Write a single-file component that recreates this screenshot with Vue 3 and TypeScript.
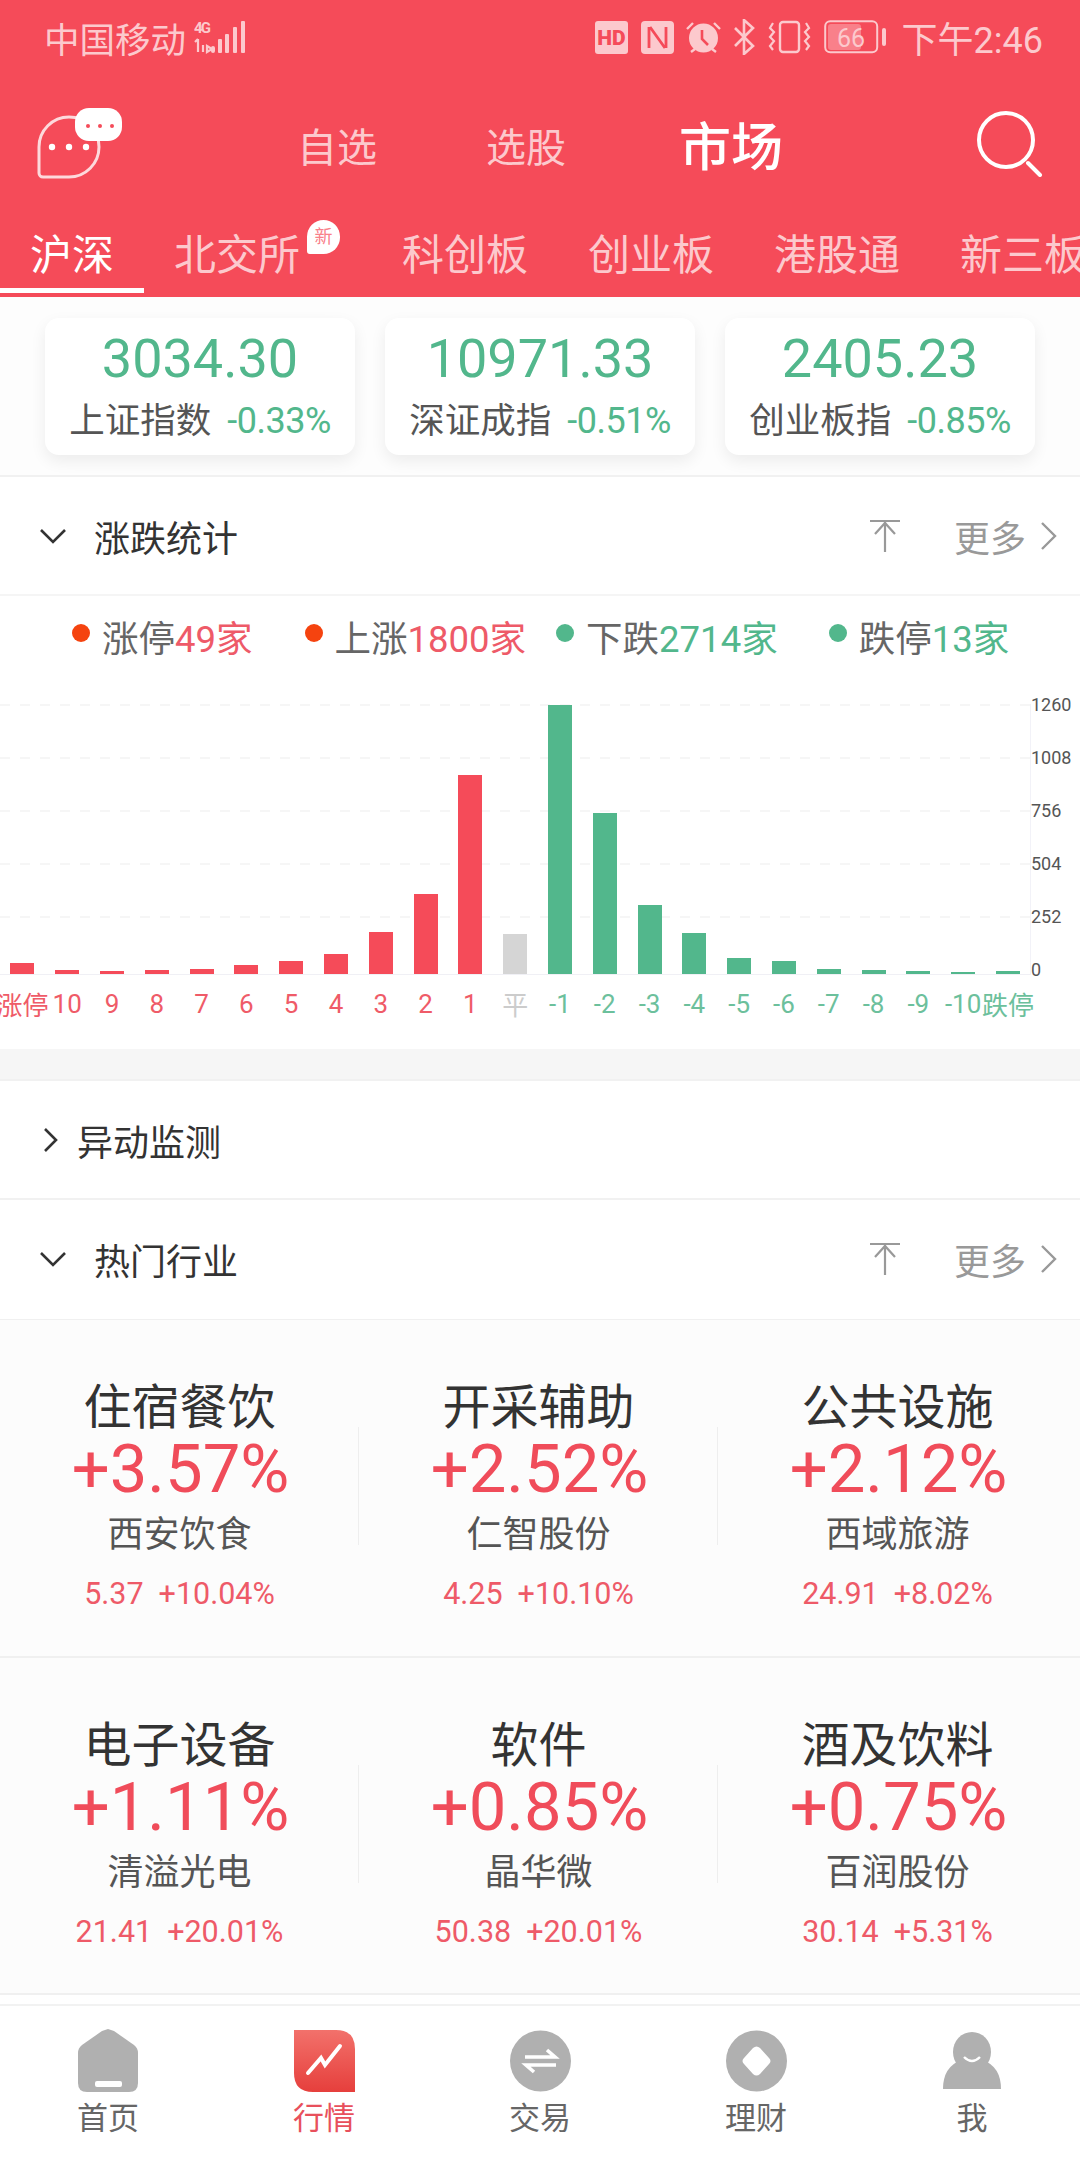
<script setup lang="ts">
const pale = '#fcc9cd'
const tabs = ['沪深', '北交所', '科创板', '创业板', '港股通', '新三板']
const indices = [
  { value: '3034.30', name: '上证指数', pct: '-0.33%' },
  { value: '10971.33', name: '深证成指', pct: '-0.51%' },
  { value: '2405.23', name: '创业板指', pct: '-0.85%' },
]
const legend = [
  { label: '涨停', value: '49家', up: true, cls: 'l1' },
  { label: '上涨', value: '1800家', up: true, cls: 'l2' },
  { label: '下跌', value: '2714家', up: false, cls: 'l3' },
  { label: '跌停', value: '13家', up: false, cls: 'l4' },
]
const bars = [
  { label: '涨停', h: 11, k: 'up' }, { label: '10', h: 4.5, k: 'up' }, { label: '9', h: 3, k: 'up' },
  { label: '8', h: 4.5, k: 'up' }, { label: '7', h: 5.5, k: 'up' }, { label: '6', h: 9.5, k: 'up' },
  { label: '5', h: 13, k: 'up' }, { label: '4', h: 20, k: 'up' }, { label: '3', h: 42, k: 'up' },
  { label: '2', h: 80, k: 'up' }, { label: '1', h: 199.5, k: 'up' }, { label: '平', h: 40, k: 'flat' },
  { label: '-1', h: 269, k: 'down' }, { label: '-2', h: 161, k: 'down' }, { label: '-3', h: 69, k: 'down' },
  { label: '-4', h: 41, k: 'down' }, { label: '-5', h: 16, k: 'down' }, { label: '-6', h: 13, k: 'down' },
  { label: '-7', h: 5, k: 'down' }, { label: '-8', h: 4, k: 'down' }, { label: '-9', h: 3, k: 'down' },
  { label: '-10', h: 2, k: 'down' }, { label: '跌停', h: 3, k: 'down' },
]
const yLabels = ['1260', '1008', '756', '504', '252', '0']
const gridLines = [0, 53, 106, 159, 212]
const industries = [
  [
    { name: '住宿餐饮', pct: '+3.57%', stock: '西安饮食', price: '5.37', chg: '+10.04%' },
    { name: '开采辅助', pct: '+2.52%', stock: '仁智股份', price: '4.25', chg: '+10.10%' },
    { name: '公共设施', pct: '+2.12%', stock: '西域旅游', price: '24.91', chg: '+8.02%' },
  ],
  [
    { name: '电子设备', pct: '+1.11%', stock: '清溢光电', price: '21.41', chg: '+20.01%' },
    { name: '软件', pct: '+0.85%', stock: '晶华微', price: '50.38', chg: '+20.01%' },
    { name: '酒及饮料', pct: '+0.75%', stock: '百润股份', price: '30.14', chg: '+5.31%' },
  ],
]
</script>

<template>
  <div class="page">
    <header class="head">
      <div class="status">
        <span class="carrier">中国移动</span>
        <svg class="sig" width="54" height="34" viewBox="0 0 54 34">
          <text x="1" y="13" font-size="15" font-family="Roboto" font-weight="700" :fill="pale" textLength="17">4G</text>
          <path d="M5 19v13M2 22l3-3M10 25v7M14 26l5 3-5 3z" :stroke="pale" stroke-width="2.2" fill="none" />
          <rect x="18" y="26" width="4" height="7" rx="2" :fill="pale" />
          <rect x="25" y="19" width="4" height="14" rx="1" :fill="pale" />
          <rect x="32" y="14" width="4" height="19" rx="1" :fill="pale" />
          <rect x="40" y="7" width="4" height="26" rx="1" :fill="pale" />
          <rect x="48" y="1" width="4" height="32" rx="1" :fill="pale" />
        </svg>
        <div class="status-right">
          <svg width="33" height="33" viewBox="0 0 33 33">
            <rect width="33" height="33" rx="3" :fill="pale" />
            <text x="16.5" y="23.500" text-anchor="middle" font-size="21" font-weight="900" font-family="Roboto" fill="#f54b59">HD</text>
          </svg>
          <svg class="m13" width="33" height="33" viewBox="0 0 33 33">
            <rect width="33" height="33" rx="4" :fill="pale" />
            <path d="M8 6v21M25 6v21M9 6l15 21" stroke="#f54b59" stroke-width="2.800" fill="none" />
          </svg>
          <svg class="m12" width="35" height="34" viewBox="0 0 35 34">
            <circle cx="17.5" cy="18" r="14.500" :fill="pale" />
            <path d="M1 9l6-6M34 9l-6-6M5 32l4-3M30 32l-4-3" :stroke="pale" stroke-width="2.4" fill="none" />
            <path d="M16 10v9l6 6" stroke="#f54b59" stroke-width="2.6" fill="none" />
          </svg>
          <svg class="m12" width="23" height="36" viewBox="0 0 23 36">
            <path d="M2 9l18 18-9 8V1l9 8L2 27" :stroke="pale" stroke-width="2.6" fill="none" />
          </svg>
          <svg class="m12" width="43" height="34" viewBox="0 0 43 34">
            <rect x="12" y="2" width="19" height="30" rx="3" :stroke="pale" stroke-width="2.4" fill="none" />
            <path d="M5 3l-3 5 4 4-4 5 4 4-4 5 3 4M38 3l3 5-4 4 4 5-4 4 4 5-3 4" :stroke="pale" stroke-width="2.2" fill="none" />
          </svg>
          <svg class="m13" width="63" height="34" viewBox="0 0 63 34">
            <rect x="1.2" y="1.2" width="52" height="31" rx="5" :stroke="pale" stroke-width="2" fill="none" />
            <rect x="4" y="4" width="33" height="26" rx="3" fill="#f9808a" />
            <text x="27" y="27" text-anchor="middle" font-size="25" font-family="Roboto" :fill="pale">66</text>
            <rect x="58" y="8" width="4" height="18" rx="2" :fill="pale" />
          </svg>
          <span class="time">下午2:46</span>
        </div>
      </div>

      <div class="nav">
        <svg class="chat" width="86" height="72" viewBox="0 0 86 72">
          <path d="M2 39a30 30 0 1 1 30 30H6a4 4 0 0 1-4-4z" fill="none" stroke="#fdd9dc" stroke-width="3" />
          <circle cx="15" cy="39" r="3.2" fill="#fff" />
          <circle cx="32" cy="39" r="3.2" fill="#fff" />
          <circle cx="49" cy="39" r="3.2" fill="#fff" />
          <rect x="38" y="0" width="47" height="33" rx="14" fill="#fff" />
          <circle cx="51" cy="18" r="2" fill="#f54b59" />
          <circle cx="63" cy="18" r="2" fill="#f54b59" />
          <circle cx="75" cy="18" r="2" fill="#f54b59" />
        </svg>
        <span class="nav-item first">自选</span>
        <span class="nav-item second">选股</span>
        <span class="nav-active">市场</span>
        <svg class="search" width="66" height="66" viewBox="0 0 66 66">
          <circle cx="29" cy="29" r="27" fill="none" stroke="#fff" stroke-width="4" />
          <path d="M51 52l12 12" stroke="#fff" stroke-width="4" stroke-linecap="round" />
        </svg>
      </div>

      <div class="tabs">
        <div v-for="(t, i) in tabs" :key="t" class="tab" :class="{ on: i === 0, wide: i === 1 }">
          {{ t }}
          <span v-if="i === 1" class="new">新</span>
        </div>
      </div>
    </header>

    <section class="indices">
      <div v-for="c in indices" :key="c.name" class="card">
        <div class="card-val">{{ c.value }}</div>
        <div class="card-sub">
          <span class="card-name">{{ c.name }}</span>
          <span class="card-pct">{{ c.pct }}</span>
        </div>
      </div>
    </section>

    <div class="sec-head">
      <svg class="chev-d" width="28" height="16" viewBox="0 0 28 16">
        <path d="M2 2l12 12L26 2" fill="none" stroke="#333" stroke-width="2.6" />
      </svg>
      <span class="sec-title">涨跌统计</span>
      <svg class="pin" width="30" height="33" viewBox="0 0 30 33">
        <path d="M0 2h30M15 2v31M5 15L15 4l10 11" fill="none" stroke="#999" stroke-width="2.2" />
      </svg>
      <span class="more">更多</span>
      <svg class="chev-r" width="18" height="30" viewBox="0 0 18 30">
        <path d="M2 2l13 13L2 28" fill="none" stroke="#999" stroke-width="2.4" />
      </svg>
    </div>

    <section class="stats">
      <div class="legend">
        <div v-for="l in legend" :key="l.label" class="leg" :class="l.cls">
          <i class="dot" :class="l.up ? 'dot-up' : 'dot-down'"></i>
          <span class="leg-label">{{ l.label }}</span>
          <span :class="l.up ? 'c-up' : 'c-down'">{{ l.value }}</span>
        </div>
      </div>
      <div class="chart">
        <div class="plot">
          <i v-for="g in gridLines" :key="g" class="grid" :style="{ top: g + 'px' }"></i>
          <div v-for="b in bars" :key="b.label" class="bar-cell">
            <div class="bar" :class="'b-' + b.k" :style="{ height: b.h + 'px' }"></div>
          </div>
        </div>
        <div class="yaxis">
          <span v-for="y in yLabels" :key="y">{{ y }}</span>
        </div>
      </div>
      <div class="xaxis">
        <span v-for="b in bars" :key="b.label" class="x-cell" :class="'x-' + b.k">{{ b.label }}</span>
      </div>
    </section>

    <div class="band"></div>

    <div class="sec-head thin">
      <svg class="chev-s" width="16" height="26" viewBox="0 0 16 26">
        <path d="M2 2l11 11L2 24" fill="none" stroke="#333" stroke-width="2.6" />
      </svg>
      <span class="sec-title">异动监测</span>
    </div>

    <div class="sec-head last">
      <svg class="chev-d" width="28" height="16" viewBox="0 0 28 16">
        <path d="M2 2l12 12L26 2" fill="none" stroke="#333" stroke-width="2.6" />
      </svg>
      <span class="sec-title">热门行业</span>
      <svg class="pin" width="30" height="33" viewBox="0 0 30 33">
        <path d="M0 2h30M15 2v31M5 15L15 4l10 11" fill="none" stroke="#999" stroke-width="2.2" />
      </svg>
      <span class="more">更多</span>
      <svg class="chev-r" width="18" height="30" viewBox="0 0 18 30">
        <path d="M2 2l13 13L2 28" fill="none" stroke="#999" stroke-width="2.4" />
      </svg>
    </div>

    <section class="hot">
      <div v-for="(row, r) in industries" :key="r" class="hot-row">
        <div v-for="it in row" :key="it.name" class="hot-cell">
          <div class="hot-name">{{ it.name }}</div>
          <div class="hot-pct">{{ it.pct }}</div>
          <div class="hot-stock">{{ it.stock }}</div>
          <div class="hot-sub"><span>{{ it.price }}</span><span>{{ it.chg }}</span></div>
        </div>
      </div>
    </section>

    <nav class="bottom">
      <div class="bt">
        <svg width="60" height="64" viewBox="0 0 60 64">
          <path d="M30 0l-6 2L4 16q-4 3-4 8v30q0 9 9 9h42q9 0 9-9V24q0-5-4-8L36 2z" fill="#b0b0b0" />
          <rect x="17" y="52" width="27" height="6" rx="2" fill="#fff" />
        </svg>
        <span>首页</span>
      </div>
      <div class="bt active">
        <svg width="61" height="62" viewBox="0 0 61 62">
          <defs>
            <linearGradient id="mk" x1="0" y1="0" x2="0" y2="1">
              <stop offset="0" stop-color="#f2716b" />
              <stop offset="1" stop-color="#e63f3c" />
            </linearGradient>
          </defs>
          <path d="M0 0h42q19 0 19 19v43H19Q0 62 0 43z" fill="url(#mk)" />
          <path d="M14 43l13-15 4 7 15-19" fill="none" stroke="#fff" stroke-width="4" stroke-linecap="round" />
        </svg>
        <span>行情</span>
      </div>
      <div class="bt">
        <svg width="61" height="62" viewBox="0 0 61 62">
          <circle cx="30.5" cy="31" r="30.5" fill="#b0b0b0" />
          <path d="M15 27h30l-8-7M46 35H16l8 7" fill="none" stroke="#fff" stroke-width="3.6" />
        </svg>
        <span>交易</span>
      </div>
      <div class="bt">
        <svg width="61" height="62" viewBox="0 0 61 62">
          <circle cx="30.5" cy="31" r="30.5" fill="#b0b0b0" />
          <path d="M27 18q3.5-3 7 0l9 10q3 3 0 6l-9 10q-3.500 3-7 0l-9-10q-3-3 0-6z" fill="#fff" />
        </svg>
        <span>理财</span>
      </div>
      <div class="bt">
        <svg width="58" height="58" viewBox="0 0 58 58">
          <ellipse cx="29" cy="20" rx="19" ry="20" fill="#b0b0b0" />
          <path d="M0 57q0-22 18-29h22q18 7 18 29z" fill="#b0b0b0" />
          <path d="M21 25q8 8 16 0" fill="none" stroke="#fff" stroke-width="2.4" />
        </svg>
        <span>我</span>
      </div>
    </nav>
  </div>
</template>

<style scoped>
.page {
  width: 1080px;
  height: 2160px;
  overflow: hidden;
  display: flex;
  flex-direction: column;
  background: #fff;
  font-family: Roboto, "Noto Sans CJK SC", sans-serif;
  color: #333;
}
.head { background: #f54b59; height: 297px; flex: none; }
.status {
  height: 74px;
  display: flex;
  align-items: center;
  padding: 0 37px 0 44px;
  color: #fcc9cd;
}
.carrier { font-size: 35.500px; margin-right: 7px; }
.status-right { margin-left: auto; display: flex; align-items: center; }
.m12 { margin-left: 12px; }
.m13 { margin-left: 13px; }
.time { font-size: 36px; margin-left: 15px; }

.nav { height: 142px; display: flex; align-items: center; padding: 0 37px; position: relative; }
.chat { margin-top: -2px; }
.nav-item { font-size: 40px; color: #fcc9cd; }
.first { margin-left: 174px; }
.second { margin-left: 109px; }
.nav-active { font-size: 52px; color: #fff; margin-left: 113px; font-weight: 500; margin-top: -4px; }
.search { margin-left: auto; margin-top: -2px; }

.tabs { height: 81px; display: flex; overflow: hidden; white-space: nowrap; }
.tab {
  flex: none;
  position: relative;
  font-size: 42px;
  line-height: 58px;
  height: 77px;
  padding: 11px 30px 0;
  box-sizing: border-box;
  color: #fcc9cd;
}
.tab.on { color: #fff; border-bottom: 5px solid #fff; }
.tab.wide { margin-right: 42px; }
.new {
  position: absolute;
  left: 163px;
  top: 4px;
  width: 33px;
  height: 34px;
  border-radius: 17px 17px 17px 3px;
  background: #fff;
  color: #f9808a;
  font-size: 18px;
  line-height: 34px;
  text-align: center;
}

.indices {
  height: 178px;
  flex: none;
  box-sizing: border-box;
  background: #fdfdfd;
  display: flex;
  gap: 30px;
  padding: 21px 45px 0;
}
.card {
  width: 310px;
  height: 137px;
  box-sizing: border-box;
  background: #fff;
  border-radius: 14px;
  box-shadow: 0 6px 16px rgba(0, 0, 0, 0.07);
  text-align: center;
  padding-top: 8px;
}
.card-val { font-size: 54px; line-height: 66px; color: #52b78c; }
.card-sub { display: flex; justify-content: center; align-items: center; gap: 16px; line-height: 50px; margin-top: 4px; }
.card-name { font-size: 35.500px; color: #555; }
.card-pct { font-size: 36px; color: #52b78c; letter-spacing: -0.5px; }

.sec-head {
  height: 119px;
  flex: none;
  box-sizing: border-box;
  border-top: 2px solid #f1f1f1;
  display: flex;
  align-items: center;
  padding-left: 39px;
  padding-right: 22px;
  background: #fff;
}
.sec-head.last { height: 121px; padding-bottom: 2px; }
.sec-title { font-size: 36px; color: #333; margin-left: 27px; }
.chev-d { flex: none; }
.chev-s { flex: none; margin-left: 4px; }
.thin .sec-title { margin-left: 18px; }
.pin { margin-left: auto; }
.more { font-size: 36px; color: #999; margin-left: 54px; }
.chev-r { margin-left: 14px; }

.stats { border-top: 2px solid #f5f5f5; height: 455px; flex: none; box-sizing: border-box; background: #fff; }
.legend { height: 80px; position: relative; display: flex; align-items: center; font-size: 36.500px; }
.leg { display: flex; align-items: center; flex: none; }
.l1 { margin-left: 72px; }
.l2 { margin-left: 52px; }
.l3 { margin-left: 30px; }
.l4 { margin-left: 51px; }
.dot { width: 18px; height: 18px; border-radius: 50%; margin-right: 12px; margin-top: -6px; }
.dot-up { background: #f5430f; }
.dot-down { background: #52b78c; }
.leg-label { color: #666; }
.c-up { color: #ee5a68; }
.c-down { color: #52b78c; }

.chart { margin-top: 28px; display: flex; align-items: flex-start; }
.plot {
  position: relative;
  width: 1030px;
  height: 270px;
  flex: none;
  display: flex;
  align-items: flex-end;
  border-bottom: 1.500px solid #f0f0f5;
  border-right: 1.500px solid #f2f2f8;
  box-sizing: content-box;
}
.grid {
  position: absolute;
  left: 0;
  right: 0;
  height: 1.500px;
  background: repeating-linear-gradient(90deg, #f6f6f6 0 10px, transparent 10px 20px);
}
.bar-cell { width: 44.800px; flex: none; display: flex; justify-content: center; position: relative; }
.bar { width: 24px; position: relative; }
.b-up { background: #f54b59; }
.b-flat { background: #d5d5d5; }
.b-down { background: #52b78c; }
.yaxis {
  height: 265px;
  margin-top: 1px;
  display: flex;
  flex-direction: column;
  justify-content: space-between;
  font-size: 18px;
  color: #555;
}
.yaxis span { height: 0; line-height: 0; }
.xaxis { display: flex; height: 57px; align-items: center; font-size: 26px; white-space: nowrap; }
.x-cell { width: 44.800px; flex: none; display: flex; justify-content: center; }
.x-up { color: #ef5b68; }
.x-flat { color: #ccc; }
.x-down { color: #6cc09c; }

.band { height: 30px; flex: none; background: #f6f6f6; }

.hot { background: #fcfcfc; flex: none; border-top: 1.500px solid #f0f0f0; }
.hot-row { height: 337.500px; display: flex; box-sizing: border-box; border-bottom: 2px solid #f0f0f0; }
.hot-cell { width: 359px; flex: none; text-align: center; position: relative; padding-top: 59px; box-sizing: border-box; }
.hot-cell:not(:last-child)::after {
  content: "";
  position: absolute;
  right: 0;
  top: 107px;
  height: 118px;
  border-right: 1.500px solid #eee;
}
.hot-name { font-size: 48px; line-height: 58px; color: #333; }
.hot-pct { font-size: 67px; line-height: 64px; color: #f04c5a; padding-left: 2px; }
.hot-stock { font-size: 36px; line-height: 50px; color: #555; margin-top: 9px; }
.hot-sub { font-size: 30.500px; line-height: 40px; color: #ee5a68; margin-top: 14px; display: flex; justify-content: center; gap: 15px; }

.bottom {
  flex: 1;
  margin-top: 9px;
  border-top: 2px solid #f2f2f2;
  display: flex;
  background: #fff;
}
.bt { width: 216px; flex: none; display: flex; flex-direction: column; align-items: center; padding-top: 23px; box-sizing: border-box; height: 155px; font-size: 31px; color: #666; }
.bt svg { height: 64px; }
.bt span { margin-top: 4px; line-height: 44px; }
.bt.active { color: #e8505c; }
</style>
